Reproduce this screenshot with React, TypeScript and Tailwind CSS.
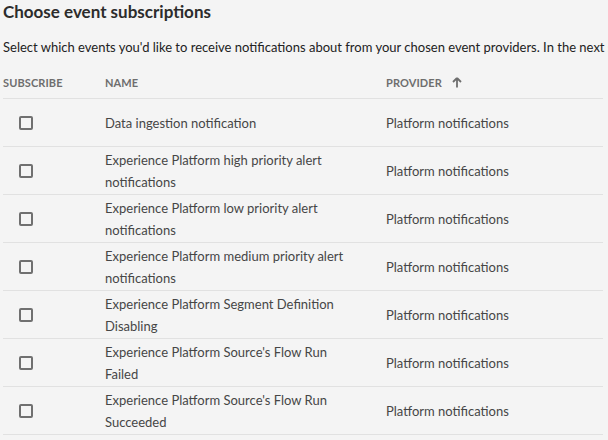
import React from 'react';

const events = [
  'Data ingestion notification',
  'Experience Platform high priority alert notifications',
  'Experience Platform low priority alert notifications',
  'Experience Platform medium priority alert notifications',
  'Experience Platform Segment Definition Disabling',
  "Experience Platform Source's Flow Run Failed",
  "Experience Platform Source's Flow Run Succeeded",
];

function App() {
  return (
    <div className="h-[440px] w-[608px] overflow-hidden bg-[#f4f4f4] pl-[3px] font-['Lato',sans-serif]">
      {/* heading */}
      <h2 className="text-[17px] font-bold leading-[24px] text-[#2c2c2c]">Choose event subscriptions</h2>
      <p className="mt-[13px] overflow-hidden whitespace-nowrap text-[13px] leading-[20px] text-[#222]">
        Select which events you'd like to receive notifications about from your chosen event providers. In the next step
      </p>

      {/* table */}
      <div className="mt-[16px] w-[600px]">
        <div className="grid h-[26px] grid-cols-[102px_281px_1fr] border-b border-[#e1e1e1] pt-[2px] text-[11px] font-bold uppercase tracking-[0.01em] text-[#6e6e6e]">
          <div>Subscribe</div>
          <div>Name</div>
          <div className="flex items-start gap-[10px]">
            Provider
            <svg width="10" height="11" viewBox="0 0 10 11" className="mt-[2px]">
              <path d="M5 1 L1 5 M5 1 L9 5 M5 1 V10.5" stroke="#6e6e6e" strokeWidth="1.8" fill="none" />
            </svg>
          </div>
        </div>
        {events.map((name) => (
          <div key={name} className="grid h-[48px] grid-cols-[102px_281px_1fr] items-center border-b border-[#e1e1e1] text-[13px] leading-[22px] text-[#464646]">
            <div className="pl-[16px]">
              <div className="h-[14px] w-[14px] rounded-[2px] border-2 border-[#707070]" />
            </div>
            <div className="pr-[24px]">{name}</div>
            <div>Platform notifications</div>
          </div>
        ))}
      </div>
    </div>
  );
}

export default App;
